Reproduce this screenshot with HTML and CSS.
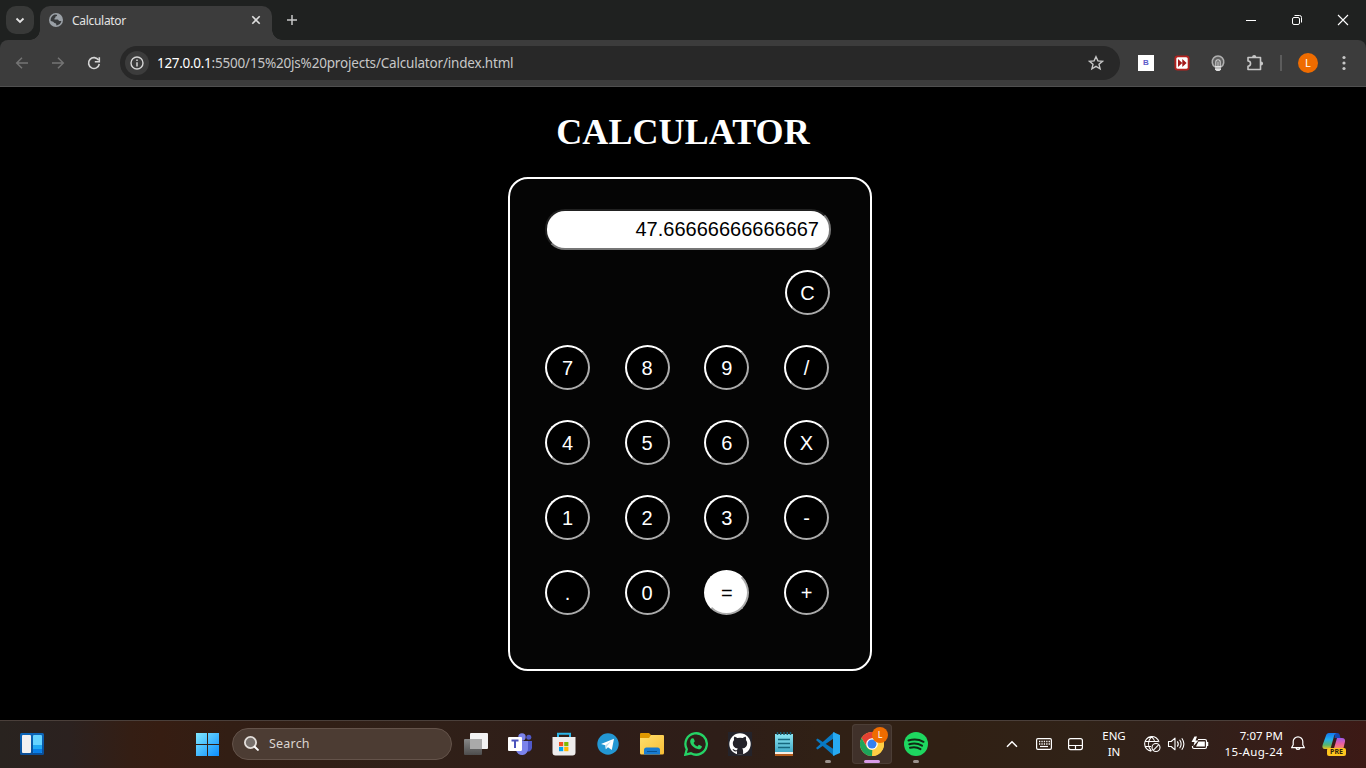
FILE: index.html
```html
<!DOCTYPE html>
<html lang="en">
<head>
<meta charset="utf-8">
<title>Calculator</title>
<link rel="stylesheet" href="styles.css">
</head>
<body>
<div class="screen">
  <header class="tabstrip">
    <div class="tab-search"><svg width="28" height="28" viewBox="0 0 28 28"><path d="M10.5 12.5l3.500 3.500 3.500-3.500" fill="none" stroke="#e3e3e3" stroke-width="1.8"/></svg></div>
    <div class="tab">
      <svg class="favicon" width="14" height="14" viewBox="0 0 14 14"><circle cx="7" cy="7" r="7" fill="#9aa0a6"/><path d="M5.800 1.500l2.200.200c.500 1-.400 1.500-1.400 1.800-.700.500.200 1.400-.800 1.800-.800.200-.500 1.300.200 1.300h2.600c1 .100.900 1.500 1.800 1.500h2c-.300 2.200-2.300 4-4.600 4.400-.9-.3-.2-1.400-.9-2-.7-.5-1.900-.1-2.200-1.200-.3-.9-2-.6-3.100-1.600C1.400 5.200 2.900 2.600 5.800 1.500z" fill="#37393b"/></svg>
      <span class="tab-title">Calculator</span>
      <svg class="tab-close" width="10" height="10" viewBox="0 0 10 10"><path d="M1.300 1.300l7.400 7.400M8.700 1.300L1.300 8.700" stroke="#dedede" stroke-width="1.600"/></svg>
    </div>
    <svg class="new-tab" width="12" height="12" viewBox="0 0 12 12"><path d="M6 1v10M1 6h10" stroke="#c7c7c7" stroke-width="1.500"/></svg>
    <div class="window-buttons">
      <svg width="46" height="40" viewBox="0 0 46 40"><path d="M18 20.500h10" stroke="#fff"/></svg>
      <svg width="46" height="40" viewBox="0 0 46 40"><g fill="none" stroke="#fff"><rect x="18.500" y="17.500" width="7" height="7" rx="1.500"/><path d="M20.500 15.500h5a2 2 0 0 1 2 2v5"/></g></svg>
      <svg width="46" height="40" viewBox="0 0 46 40"><path d="M18 15l10 10M28 15L18 25" stroke="#fff" stroke-width="1.100"/></svg>
    </div>
  </header>
  <nav class="toolbar">
    <svg width="36" height="36" viewBox="0 0 36 36"><path d="M24 18H13M18 12.700L12.700 18l5.300 5.300" fill="none" stroke="#747474" stroke-width="1.500"/></svg>
    <svg width="36" height="36" viewBox="0 0 36 36"><path d="M12 18h11M18 12.700l5.300 5.300-5.300 5.300" fill="none" stroke="#747474" stroke-width="1.500"/></svg>
    <svg width="36" height="36" viewBox="0 0 36 36"><path d="M22.600 15.200A5.400 5.400 0 1 0 23.300 19" fill="none" stroke="#d5d5d5" stroke-width="1.600"/><path d="M23.300 12.200v4.500h-4.500" fill="none" stroke="#d5d5d5" stroke-width="1.600"/></svg>
    <div class="omnibox">
      <span class="info"><svg width="14" height="14" viewBox="0 0 14 14"><circle cx="7" cy="7" r="6" fill="none" stroke="#d5d5d5" stroke-width="1.400"/><path d="M7 6.200v4.200M7 3.600v1.500" stroke="#d5d5d5" stroke-width="1.500"/></svg></span>
      <span class="url"><b>127.0.0.1</b>:5500/15%20js%20projects/Calculator/index.html</span>
      <svg width="16" height="16" viewBox="0 0 16 16"><path d="M8 1.700l1.900 4.200 4.600.400-3.500 3 1.100 4.600L8 11.400l-4.100 2.500L5 9.300l-3.500-3 4.600-.400z" fill="none" stroke="#c7c7c7" stroke-width="1.400"/></svg>
    </div>
    <div class="extensions">
      <span class="ext-slot"><span class="ext-b">B</span></span>
      <span class="ext-slot"><svg width="16" height="16" viewBox="0 0 16 16"><rect x=".5" y=".5" width="15" height="15" rx="3" fill="#b3221f"/><rect x="2.300" y="2.300" width="11.400" height="11.400" rx="1.500" fill="#fff"/><path d="M4 4l4.300 4L4 12zM8.300 4l4.300 4-4.300 4z" fill="#a3191a"/></svg></span>
      <span class="ext-slot"><svg width="16" height="18" viewBox="0 0 16 18"><path d="M5 12.800A5.800 5.800 0 1 1 11 12.800z" fill="#606060" stroke="#b0b0b0" stroke-width="1.500"/><path d="M5.800 12V8a2.200 2.200 0 0 1 4.400 0v4M8 7.500V12" fill="none" stroke="#cfcfcf" stroke-width="1.100"/><path d="M5 12h6v3.500L9.500 17h-3L5 15.500z" fill="#e0e0e0"/><path d="M5 14h6" stroke="#999"/></svg></span>
      <span class="ext-slot"><svg class="puzzle" width="18" height="18" viewBox="0 0 18 18"><path d="M2 3.500h12.500v12H2v-3.300c3.400 0 3.400-5.200 0-5.200z" fill="none" stroke="#c7c7c7" stroke-width="1.600" stroke-linejoin="round"/><path d="M6.100 3a2.100 2.100 0 0 1 4.200 0zM15 7.400a2.100 2.100 0 0 1 0 4.200z" fill="#c7c7c7"/></svg></span>
    </div>
    <span class="divider"></span>
    <span class="avatar">L</span>
    <svg class="menu" width="4" height="16" viewBox="0 0 4 16"><g fill="#c7c7c7"><circle cx="2" cy="2.500" r="1.600"/><circle cx="2" cy="8" r="1.600"/><circle cx="2" cy="13.500" r="1.600"/></g></svg>
  </nav>

  <main class="page">
    <h1 class="heading">CALCULATOR</h1>
    <section class="calculator">
      <input class="display" type="text" value="47.66666666666667" readonly>
      <div class="clear-row"><button class="key">C</button></div>
      <div class="key-row"><button class="key">7</button><button class="key">8</button><button class="key">9</button><button class="key">/</button></div>
      <div class="key-row"><button class="key">4</button><button class="key">5</button><button class="key">6</button><button class="key">X</button></div>
      <div class="key-row"><button class="key">1</button><button class="key">2</button><button class="key">3</button><button class="key">-</button></div>
      <div class="key-row"><button class="key">.</button><button class="key">0</button><button class="key key-equals">=</button><button class="key">+</button></div>
    </section>
  </main>

  <footer class="taskbar">
    <svg class="widgets" width="24" height="22" viewBox="0 0 24 22"><defs><linearGradient id="wg" x2="0" y2="1"><stop stop-color="#0b65b8"/><stop offset="1" stop-color="#0a4d96"/></linearGradient></defs><rect width="24" height="22" rx="1.500" fill="url(#wg)"/><rect x="2" y="2" width="9" height="18" rx="1" fill="#f2f0f0"/><rect x="13" y="2" width="9" height="18" rx="1" fill="#65d3ff"/><path d="M13 12h9v4h-9z" fill="#20a9f4"/><path d="M13 16h9v3a1 1 0 0 1-1 1h-7a1 1 0 0 1-1-1z" fill="#087ee8"/></svg>
    <svg class="start" width="23" height="23" viewBox="0 0 23 23"><defs><linearGradient id="st" x2="1" y2="1"><stop stop-color="#80e8ff"/><stop offset="1" stop-color="#0b8dff"/></linearGradient></defs><path d="M0 0h11v11H0zM12 0h11v11H12zM0 12h11v11H0zM12 12h11v11H12z" fill="url(#st)"/></svg>
    <div class="search"><svg width="18" height="18" viewBox="0 0 18 18"><circle cx="7.500" cy="7.500" r="5.600" fill="#77706c" stroke="#e4dfdb" stroke-width="1.800"/><path d="M11.700 11.700l3.200 3.200" stroke="#fff" stroke-width="2" stroke-linecap="round"/></svg><span>Search</span></div>
    <div class="apps">
      <span class="app"><svg width="24" height="24" viewBox="0 0 24 24"><defs><linearGradient id="tv" x2="0" y2="1"><stop stop-color="#888"/><stop offset="1" stop-color="#4d4d4d"/></linearGradient></defs><rect x="6" y="1" width="18" height="16" rx="1" fill="#f2f2f2"/><rect y="7" width="18" height="16" rx="1" fill="url(#tv)"/><path d="M6 7h12v10H6z" fill="#aaa"/></svg></span>
      <span class="app"><svg width="24" height="24" viewBox="0 0 24 24"><circle cx="20.800" cy="5.300" r="2.500" fill="#5059c9"/><circle cx="14" cy="5" r="3.700" fill="#7b83eb"/><path d="M18 9h6v7a4 4 0 0 1-6 3z" fill="#5059c9"/><path d="M8 9h12v7a6 6 0 0 1-12 2z" fill="#7b83eb"/><path d="M8 8h6v11H8z" fill="#454b9d"/><rect y="5" width="14" height="14" rx="1" fill="#fff"/><path d="M3.500 8.500h7M7 8.500V16" stroke="#4b53bc" stroke-width="2"/></svg></span>
      <span class="app"><svg width="24" height="24" viewBox="0 0 24 24"><path d="M6 6V1.700h12V6" fill="none" stroke="#2bb5e8" stroke-width="2"/><path d="M.500 5h23v15.500a3 3 0 0 1-3 3h-17a3 3 0 0 1-3-3z" fill="#eeecec"/><path d="M7 10h4.200v4.200H7z" fill="#f25022"/><path d="M12.200 10h4.200v4.200h-4.200z" fill="#7fba00"/><path d="M7 15h4.200v4.200H7z" fill="#00a4ef"/><path d="M12.200 15h4.200v4.200h-4.200z" fill="#ffb900"/></svg></span>
      <span class="app"><svg width="24" height="24" viewBox="0 0 24 24"><circle cx="12" cy="12" r="10.700" fill="#2397d3"/><path d="M5 12l13-5.300-2.200 11.200-3.800-2.600-2.200 2-.500-4z" fill="#fff"/><path d="M9.300 13.300l6.200-4.200-4.600 5.200-.9 2.800z" fill="#bcdced"/></svg></span>
      <span class="app"><svg width="24" height="24" viewBox="0 0 24 24"><defs><linearGradient id="fe" x2="1" y2="1"><stop stop-color="#ffe06e"/><stop offset="1" stop-color="#f8bd35"/></linearGradient></defs><path d="M0 2a1 1 0 0 1 1-1h8l2 2v4H0z" fill="#df9800"/><path d="M0 6h9l2-3H23a1 1 0 0 1 1 1v17a1.500 1.500 0 0 1-1.500 1.500h-21A1.500 1.500 0 0 1 0 21z" fill="url(#fe)"/><path d="M4 22.500V18a2.500 2.500 0 0 1 2.500-2.500h11A2.500 2.500 0 0 1 20 18v4.500z" fill="#187bd0"/><path d="M7 19.500h10" stroke="#075292"/></svg></span>
      <span class="app"><svg width="24" height="24" viewBox="0 0 24 24"><path d="M1.300 22.700l1.500-5.500a10.700 10.700 0 1 1 4.100 4.100z" fill="none" stroke="#25d366" stroke-width="2.300"/><path d="M8 6.300l1.700.200 1.100 2.800-1.200 1.600c1 1.800 2 2.700 3.800 3.500l1.500-1.600 3 1.400c0 2-1.500 3.100-3.300 3.100-4.500-.500-8.400-4.600-8.400-7.700 0-1.500.8-2.800 1.800-3.300z" fill="#25d366"/></svg></span>
      <span class="app"><svg width="24" height="24" viewBox="0 0 24 24"><path d="M0 0h24v24H0z" fill="#24232a"/><circle cx="12" cy="12" r="10.700" fill="#fff"/><path d="M9 22.800v-3.500c-3 .7-3.800-1-4.500-2.300 1.700-.3 2 1.800 4.500 1.200.1-.8.4-1.300.8-1.700-3.500-.3-5-2.300-5-5.200 0-1.400.5-2.500 1.300-3.400-.3-.9-.3-2 .1-3.100 1.200 0 2.300.7 3 1.300a11 11 0 0 1 5.600 0c.7-.6 1.800-1.300 3-1.300.4 1.100.4 2.200.1 3.100.8.9 1.300 2 1.300 3.400 0 2.900-1.500 4.900-5 5.200.6.5.9 1.300.9 2.500v3.800z" fill="#24232a"/></svg></span>
      <span class="app"><svg width="24" height="24" viewBox="0 0 24 24"><defs><linearGradient id="np" x2="0" y2="1"><stop stop-color="#8be5f2"/><stop offset="1" stop-color="#45abc8"/></linearGradient></defs><path d="M3 21h18v3H3z" fill="#b35c1c"/><path d="M3 19h18v3H3z" fill="#f7eee3"/><path d="M3 2h18v18H3z" fill="url(#np)"/><path d="M6 7.500h12M6 11.500h12M6 15.500h12" stroke="#16677e" stroke-width="1.500"/><path d="M5.500 0v3M8.700 0v3M12 0v3M15.300 0v3M18.500 0v3" stroke="#175c72" stroke-width="1.500"/></svg></span>
      <span class="app running"><svg width="24" height="24" viewBox="0 0 24 24"><path d="M0 8l1.500-1.500L19 18v5.500h-1.500z" fill="#0878bf"/><path d="M0 16l1.500 1.500L19 5.500V.500h-1.500z" fill="#087ac5"/><path d="M17.500.200L24 3v18l-6.500 2.800c-.7 0-.5-.3-.5-1V1.200c0-.7 0-.9.500-1z" fill="#27aaf2"/></svg></span>
      <span class="app running active"><svg width="24" height="24" viewBox="0 0 24 24"><circle cx="12" cy="12" r="12" fill="#ffce44"/><path d="M1.600 6A12 12 0 0 1 22.400 6H12L7 15z" fill="#e34133"/><path d="M1.600 6l5.200 9a6 6 0 0 0 5.500 3L12 24A12 12 0 0 1 1.600 6z" fill="#1da45a"/><path d="M12 24l5.200-9 5.200-9A12 12 0 0 1 12 24z" fill="#ffce44"/><circle cx="12" cy="12" r="5.800" fill="#fff"/><circle cx="12" cy="12" r="4.500" fill="#337ff0"/></svg><span class="badge">L</span></span>
      <span class="app running"><svg width="24" height="24" viewBox="0 0 24 24"><circle cx="12" cy="12" r="12" fill="#1ed760"/><path d="M4.500 8.500c5.300-1.600 11-.9 15 1.300M5.300 12.300c4.500-1.300 9-.8 12.700 1.400M6 15.800c3.700-1 7.400-.6 10.500 1.300" fill="none" stroke="#102915" stroke-width="2" stroke-linecap="round"/></svg></span>
    </div>
    <div class="tray">
      <svg width="32" height="24" viewBox="0 0 32 24"><path d="M11 14.800l5-5 5 5" fill="none" stroke="#fff" stroke-width="1.500"/></svg>
      <svg width="32" height="24" viewBox="0 0 32 24"><rect x="8.600" y="6.600" width="14.800" height="10.800" rx="1.300" fill="none" stroke="#fff" stroke-width="1.200"/><path d="M11 9.500h11M11 12h11" stroke="#fff" stroke-width="1.300" stroke-dasharray="1.300 1.100"/><path d="M12 14.500h8" stroke="#fff" stroke-width="1.200"/></svg>
      <svg width="32" height="24" viewBox="0 0 32 24"><rect x="8.600" y="6.600" width="13.800" height="11" rx="2" fill="none" stroke="#fff" stroke-width="1.200"/><path d="M8.500 13.500h14M15.500 13.500v4" stroke="#fff" stroke-width="1.200"/></svg>
      <div class="lang"><span>ENG</span><span>IN</span></div>
      <div class="status">
        <svg width="24" height="24" viewBox="0 0 24 24"><g fill="none" stroke="#fff" stroke-width="1.100"><path d="M19 10a7.300 7.300 0 1 0-8 9.100M11.500 4.600c-4 4.400-4 10 0 14.500M11.500 4.600c2 1.800 3 3.500 3.100 5.400M5 9.500h13M5 14.500h6"/><circle cx="16" cy="15.500" r="4"/><path d="M13.200 18.300l5.600-5.600"/></g></svg>
        <svg width="24" height="24" viewBox="0 0 24 24"><path d="M4.500 9.500h2.700L11 6.200v11.600l-3.800-3.300H4.500z" fill="none" stroke="#fff" stroke-width="1.100" stroke-linejoin="round"/><path d="M13.300 9.300q2 2.700 0 5.400M15.600 7.700q3.100 4.300 0 8.600M17.800 6.200q4.200 5.800 0 11.600" fill="none" stroke="#fff" stroke-width="1.100"/></svg>
        <svg width="24" height="24" viewBox="0 0 24 24"><path d="M10 7.500h7a1.500 1.500 0 0 1 1.500 1.500v6a1.500 1.500 0 0 1-1.500 1.500H6A1.500 1.500 0 0 1 4.500 15v-1" fill="none" stroke="#fff" stroke-width="1.200"/><path d="M10.500 9.500h6.300v5H8z" fill="#fff"/><path d="M19.500 10v4" stroke="#fff" stroke-width="1.500"/><path d="M6.500 4.500L3.500 10h3l-1 4 5-5.500h-3L9 4.500z" fill="#fff"/></svg>
      </div>
      <div class="clock"><span>7:07 PM</span><span class="date">15-Aug-24</span></div>
      <svg class="bell" width="24" height="24" viewBox="0 0 24 24"><path d="M5.600 15.700l1.600-2.900V9.600a4.800 4.800 0 0 1 9.600 0v3.200l1.600 2.900zM10 16a2.100 2.100 0 0 0 4 0" fill="none" stroke="#fff" stroke-width="1.200" stroke-linejoin="round"/></svg>
      <div class="copilot"><svg width="24" height="23" viewBox="0 0 24 23"><defs><linearGradient id="ca" x2="0" y2="1"><stop stop-color="#1377ee"/><stop offset=".4" stop-color="#22aeed"/><stop offset=".75" stop-color="#58b56d"/><stop offset="1" stop-color="#e4c223"/></linearGradient><linearGradient id="cb" x2="0" y2="1"><stop stop-color="#a158e8"/><stop offset=".5" stop-color="#ed609c"/><stop offset="1" stop-color="#f59c55"/></linearGradient></defs><path d="M13 1h2c2 0 2.500 1 3 3l.500 2h-6z" fill="#1647af"/><path d="M7 1h7.500C12.500 1.500 12 4 11.500 6L9 15c-.5 1.500-1 2-2.500 2H3c-2.500 0-3-2-2.400-4L4 3.500C4.500 2 5.300 1 7 1z" fill="url(#ca)"/><path d="M15 6h5c2.300 0 3.500 1.500 3 3.700L21 18H11.500z" fill="url(#cb)"/></svg><span class="pre">PRE</span></div>
    </div>
  </footer>
</div>
</body>
</html>
```
FILE: styles.css
```css
* { box-sizing: border-box; }
body { margin: 0; background: #000; overflow: hidden; font-family: "Noto Sans", "Open Sans", sans-serif; }
svg { display: block; flex: none; }
.screen { width: 1366px; height: 768px; display: flex; flex-direction: column; background: linear-gradient(#1f2120 60px, #000 60px); }

.tabstrip { position: relative; z-index: 1; height: 40px; flex: none; display: flex; background: #1f2120; padding-left: 6px; }
.tab-search { width: 28px; height: 28px; margin-top: 6px; border-radius: 10px; background: #383938; }
.tab { position: relative; width: 232px; height: 34px; margin: 6px 0 0 6px; padding: 0 11px 6px 9px; display: flex; align-items: center; border-radius: 10px 10px 0 0; background: #3c3c3c; }
.tab::before, .tab::after { content: ""; position: absolute; bottom: 0; width: 10px; height: 10px; }
.tab::before { left: -10px; background: radial-gradient(circle at 0 0, transparent 9.5px, #3c3c3c 10px); }
.tab::after { right: -10px; background: radial-gradient(circle at 100% 0, transparent 9.5px, #3c3c3c 10px); }
.tab-title { margin: 1px 0 0 9px; font-size: 12px; letter-spacing: -0.3px; line-height: 16px; color: #e3e3e3; flex: 1; }
.new-tab { margin: 14px 0 0 14px; }
.window-buttons { margin-left: auto; display: flex; }

.toolbar { height: 47px; flex: none; display: flex; align-items: center; padding: 0 20px 1px 4px; background: #3c3c3c; border-bottom: 1px solid #505050; border-radius: 8px 8px 0 0; }
.omnibox { width: 1000px; height: 34px; margin-left: 8px; padding: 0 16px 0 5px; display: flex; align-items: center; border-radius: 17px; background: #282828; }
.info { width: 24px; height: 24px; display: grid; place-items: center; border-radius: 50%; background: #3c3c3c; }
.url { margin-left: 8px; font-size: 13.5px; letter-spacing: -0.19px; line-height: 20px; color: #c7c7c7; flex: 1; white-space: nowrap; }
.url b { font-weight: 400; color: #fff; letter-spacing: -0.3px; }
.extensions { display: flex; margin-left: 8px; }
.ext-slot { width: 36px; height: 36px; display: grid; place-items: center; }
.ext-b { width: 16px; height: 16px; background: #fff; color: #5c5cc8; font: 700 8px/16px "Liberation Sans", sans-serif; text-align: center; }
.puzzle { margin-left: 2px; }
.divider { width: 2px; height: 16px; margin-left: 8px; background: #5c5c5c; }
.avatar { width: 20px; height: 20px; margin-left: 16px; border-radius: 50%; background: #ef6c00; color: #fff; font-size: 11px; line-height: 20px; text-align: center; }
.menu { margin-left: auto; }

.page { height: 633px; flex: none; background: #000; display: flex; flex-direction: column; align-items: center; }
.heading { margin: 24px 0 0; color: #fff; font: bold 36px/42px "Liberation Serif", serif; letter-spacing: 0.08px; }
.calculator { width: 364px; height: 494px; margin: 24px 0 0 14px; padding: 30px 35px; border: 2px solid #fff; border-radius: 20px; background: #050505; }
.display { display: block; width: 286px; height: 41px; margin: 0; padding: 0 10px; border: 2px inset #767676; border-radius: 20px; background: #fff; color: #000; font: 20px "Liberation Sans", sans-serif; text-align: right; outline: none; }
.clear-row { display: flex; justify-content: flex-end; width: 285px; margin-top: 20px; }
.key-row { display: flex; justify-content: space-between; width: 284px; margin-top: 30px; }
.key { width: 45px; height: 45px; padding: 1px 0 0; border: 2px outset #fff; border-radius: 50%; background: #000; color: #fff; font: 20px "Liberation Sans", sans-serif; }
.key-equals { background: #fff; color: #000; }

.taskbar { height: 48px; flex: none; display: flex; align-items: center; padding-bottom: 1px; border-top: 1px solid #4a3f3a; background: linear-gradient(90deg, #29231f, #2b211f 70px, #341e14 130px, #361d12 160px, #321e14 230px, #302018 420px, #2f1d18 600px, #2e1e18 720px, #302015 820px, #302014 950px, #302217 1080px, #30201a 1180px, #371d18 1280px, #3c1915); }
.widgets { margin-left: 20px; }
.start { margin-left: 152px; }
.search { width: 220px; height: 32px; margin-left: 13px; padding-left: 10px; display: flex; align-items: center; gap: 8px; border: 1px solid #64534a; border-radius: 16px; background: #4c3c33; color: #dbd5d1; font-size: 12.5px; letter-spacing: 0.2px; }
.search span { line-height: 20px; }
.apps { display: flex; margin-left: 4px; gap: 4px; height: 40px; }
.app { position: relative; width: 40px; height: 40px; display: grid; place-items: center; border-radius: 4px; }
.running::after { content: ""; position: absolute; left: 17px; bottom: 1px; width: 6px; height: 3px; border-radius: 2px; background: #9b928d; }
.active { background: #40312a; box-shadow: inset 0 0 0 1px #4c3e36; }
.active::after { left: 12px; width: 16px; background: #d99be8; }
.badge { position: absolute; left: 20px; top: 3px; width: 16px; height: 16px; border-radius: 50%; background: #ef6c00; color: #fff; font-size: 9px; line-height: 16px; text-align: center; }
.tray { display: flex; align-items: center; margin-left: auto; width: 370px; color: #fff; font-size: 11.5px; line-height: 16px; }
.lang { width: 44px; display: flex; flex-direction: column; text-align: center; }
.status { display: flex; margin-left: 4px; }
.clock { width: 71px; display: flex; flex-direction: column; text-align: right; white-space: nowrap; }
.date { letter-spacing: 0.35px; }
.bell { margin-left: 3px; }
.copilot { position: relative; width: 24px; height: 24px; margin-left: 12px; }
.pre { position: absolute; left: 5px; top: 16px; width: 19px; height: 8px; border-radius: 2px; background: #ffc51f; color: #30200a; font-size: 7px; font-weight: 700; line-height: 8px; text-align: center; }
```
